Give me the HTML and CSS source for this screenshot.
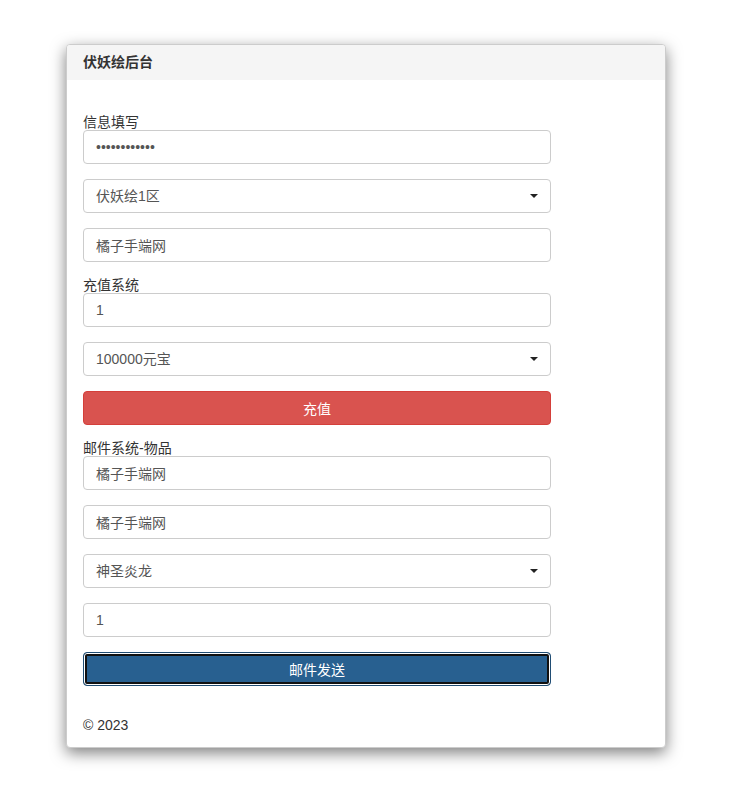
FILE: index.html
```html
<!DOCTYPE html>
<html lang="zh-CN">
<head>
    <meta charset="UTF-8">
    <meta name="viewport" content="width=device-width, initial-scale=1.0">
    <title>伏妖绘后台</title>
    <link rel="stylesheet" href="styles.css">
</head>
<body>

    <div class="panel">
        <div class="panel-heading">伏妖绘后台</div>
        <div class="panel-body">
            <form class="form">
                <label for="pwd">信息填写</label>
                <input type="password" id="pwd" class="form-control" value="123456789012">
                <div class="select-wrap">
                    <select id="server" class="form-control">
                        <option>伏妖绘1区</option>
                    </select>
                </div>
                <input type="text" id="account" class="form-control" value="橘子手端网">

                <label for="amount">充值系统</label>
                <input type="text" id="amount" class="form-control" value="1">
                <div class="select-wrap">
                    <select id="item" class="form-control">
                        <option>100000元宝</option>
                    </select>
                </div>
                <button type="button" class="btn btn-danger">充值</button>

                <label for="mailTitle">邮件系统-物品</label>
                <input type="text" id="mailTitle" class="form-control" value="橘子手端网">
                <input type="text" id="mailBody" class="form-control" value="橘子手端网">
                <div class="select-wrap">
                    <select id="goods" class="form-control">
                        <option>神圣炎龙</option>
                    </select>
                </div>
                <input type="text" id="count" class="form-control" value="1">
                <button type="button" class="btn btn-primary active">邮件发送</button>
            </form>
            <p class="footer">&copy; 2023</p>
        </div>
    </div>

</body>
</html>
```

FILE: styles.css
```css
body {
    margin: 0;
    padding: 44px 0 50px;
    font-family: "Liberation Sans", "Noto Sans CJK SC", sans-serif;
    font-size: 14px;
    color: #333;
    background-color: #fff;
}
.panel {
    width: 600px;
    margin: 0 auto;
    background-color: #fff;
    border: 1px solid #ccc;
    border-radius: 4px;
    box-shadow: 0 5px 15px rgba(0, 0, 0, 0.5);
    box-sizing: border-box;
}
.panel-heading {
    padding: 9px 16px;
    height: 17px;
    line-height: 17px;
    font-weight: bold;
    background-color: #f5f5f5;
    border-radius: 3px 3px 0 0;
}
.panel-body {
    padding: 15px 16px 12px;
}
.form {
    margin-top: 19px;
    max-width: 468px;
}
label {
    display: block;
    height: 16px;
    line-height: 16px;
    margin-top: -1px;
    padding-top: 1px;
}
.form-control {
    display: block;
    width: 100%;
    height: 34px;
    margin: 0 0 15px;
    padding: 6px 12px;
    box-sizing: border-box;
    font-family: inherit;
    font-size: 14px;
    color: #555;
    background-color: #fff;
    border: 1px solid #ccc;
    border-radius: 4px;
    outline: none;
}
select.form-control {
    -webkit-appearance: none;
    appearance: none;
}
.select-wrap {
    position: relative;
}
.select-wrap::after {
    content: "";
    position: absolute;
    right: 13px;
    top: 15px;
    border-left: 4px solid transparent;
    border-right: 4px solid transparent;
    border-top: 4px solid #222;
    pointer-events: none;
}
.btn {
    display: block;
    width: 100%;
    height: 34px;
    margin: 0 0 15px;
    font-family: inherit;
    font-size: 14px;
    color: #fff;
    border-radius: 4px;
    border: 1px solid transparent;
    cursor: pointer;
}
.btn-danger {
    background-color: #d9534f;
    border-color: #d43f3a;
}
.btn-primary {
    background-color: #337ab7;
    border-color: #2e6da4;
}
.btn-primary.active {
    background-color: #286090;
    border-color: #204d74;
    box-shadow: inset 0 0 0 1px #fff, inset 0 0 0 3px #111;
}
.footer {
    margin: 29px 0 0;
    line-height: 20px;
}
```
